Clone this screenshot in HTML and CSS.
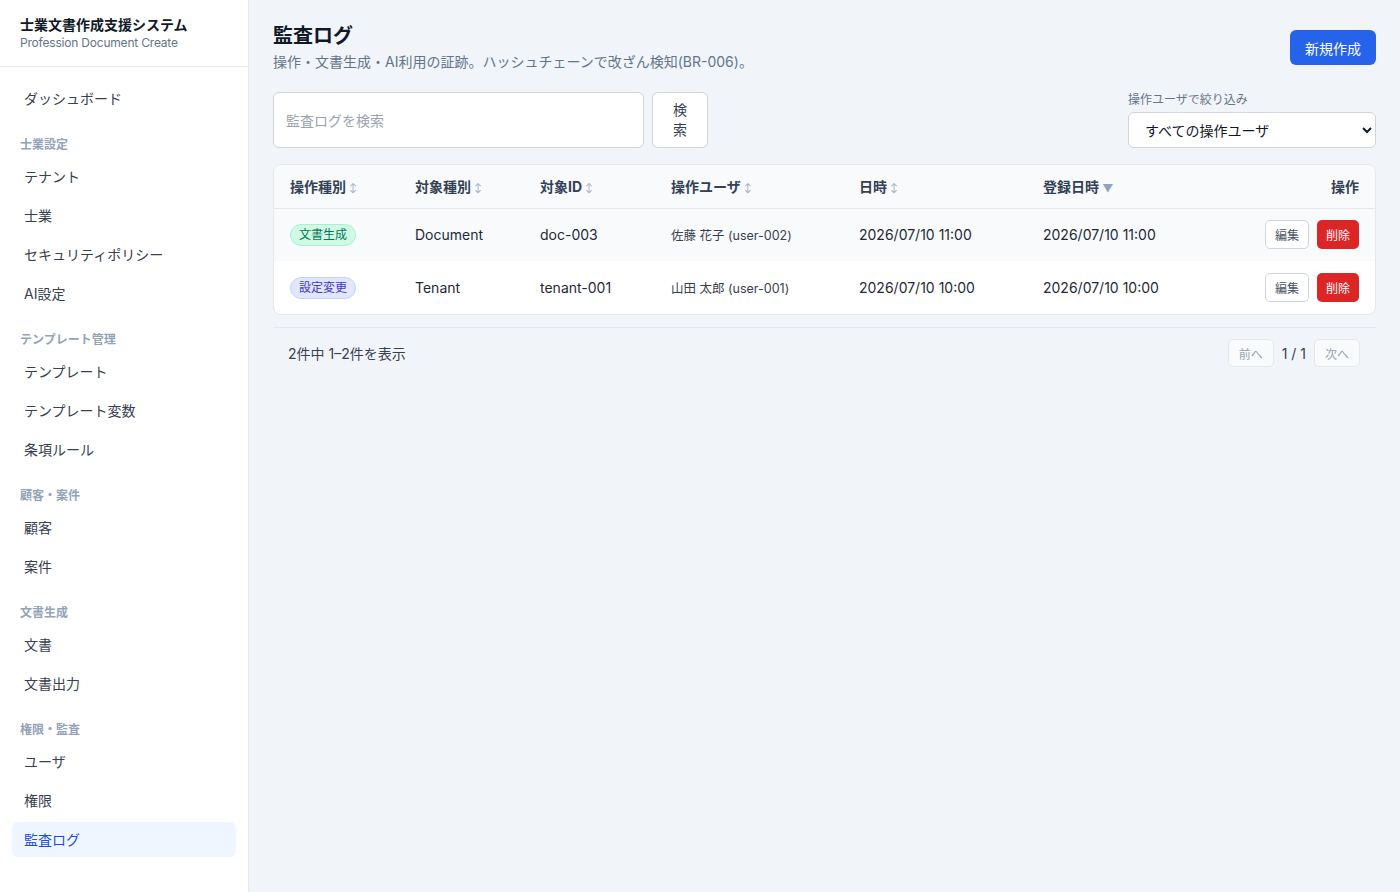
FILE: index.html
```html
<!DOCTYPE html>
<html lang="ja">
<head>
    <meta charset="UTF-8">
    <meta name="viewport" content="width=device-width, initial-scale=1.0">
    <title>監査ログ</title>
    <link rel="stylesheet" href="styles.css">
</head>
<body>
    <aside class="sidebar">
        <div class="brand">
            <div class="brand-title">士業文書作成支援システム</div>
            <div class="brand-sub">Profession Document Create</div>
        </div>
        <nav class="nav">
            <a class="nav-item">ダッシュボード</a>
            <div class="nav-label">士業設定</div>
            <a class="nav-item">テナント</a>
            <a class="nav-item">士業</a>
            <a class="nav-item">セキュリティポリシー</a>
            <a class="nav-item">AI設定</a>
            <div class="nav-label">テンプレート管理</div>
            <a class="nav-item">テンプレート</a>
            <a class="nav-item">テンプレート変数</a>
            <a class="nav-item">条項ルール</a>
            <div class="nav-label">顧客・案件</div>
            <a class="nav-item">顧客</a>
            <a class="nav-item">案件</a>
            <div class="nav-label">文書生成</div>
            <a class="nav-item">文書</a>
            <a class="nav-item">文書出力</a>
            <div class="nav-label">権限・監査</div>
            <a class="nav-item">ユーザ</a>
            <a class="nav-item">権限</a>
            <a class="nav-item active">監査ログ</a>
        </nav>
    </aside>

    <main class="main">
        <div class="page-head">
            <div>
                <h1>監査ログ</h1>
                <p class="page-desc">操作・文書生成・AI利用の証跡。ハッシュチェーンで改ざん検知(BR-006)。</p>
            </div>
            <button class="btn-primary">新規作成</button>
        </div>

        <div class="toolbar">
            <div class="search">
                <input type="text" placeholder="監査ログを検索">
                <button class="btn-search">検索</button>
            </div>
            <div class="filter">
                <label for="userFilter">操作ユーザで絞り込み</label>
                <select id="userFilter">
                    <option>すべての操作ユーザ</option>
                </select>
            </div>
        </div>

        <div class="card">
            <table>
                <thead>
                    <tr>
                        <th class="c1">操作種別 <span class="sort">↕</span></th>
                        <th class="c2">対象種別 <span class="sort">↕</span></th>
                        <th class="c3">対象ID <span class="sort">↕</span></th>
                        <th class="c4">操作ユーザ <span class="sort">↕</span></th>
                        <th class="c5">日時 <span class="sort">↕</span></th>
                        <th class="c6">登録日時 <span class="sort active">▼</span></th>
                        <th class="right">操作</th>
                    </tr>
                </thead>
                <tbody>
                    <tr class="shaded">
                        <td><span class="badge green">文書生成</span></td>
                        <td>Document</td>
                        <td>doc-003</td>
                        <td class="small">佐藤 花子 (user-002)</td>
                        <td>2026/07/10 11:00</td>
                        <td>2026/07/10 11:00</td>
                        <td class="right"><button class="btn-edit">編集</button><button class="btn-delete">削除</button></td>
                    </tr>
                    <tr>
                        <td><span class="badge indigo">設定変更</span></td>
                        <td>Tenant</td>
                        <td>tenant-001</td>
                        <td class="small">山田 太郎 (user-001)</td>
                        <td>2026/07/10 10:00</td>
                        <td>2026/07/10 10:00</td>
                        <td class="right"><button class="btn-edit">編集</button><button class="btn-delete">削除</button></td>
                    </tr>
                </tbody>
            </table>
        </div>

        <div class="pager">
            <span class="count">2件中 1–2件を表示</span>
            <div class="pages">
                <button class="btn-page" disabled>前へ</button>
                <span class="page-no">1 / 1</span>
                <button class="btn-page" disabled>次へ</button>
            </div>
        </div>
    </main>
</body>
</html>
```

FILE: styles.css
```css
* {
    box-sizing: border-box;
}
body {
    margin: 0;
    font-family: Inter, "Noto Sans CJK JP", sans-serif;
    background-color: #f1f5f9;
    color: #1f2937;
    display: flex;
    min-height: 892px;
}
.sidebar {
    width: 249px;
    flex-shrink: 0;
    background: #fff;
    border-right: 1px solid #e5e7eb;
}
.brand {
    padding: 15px 20px;
    border-bottom: 1px solid #e5e7eb;
}
.brand-title {
    font-size: 14px;
    font-weight: 700;
    line-height: 20px;
    color: #111827;
}
.brand-sub {
    font-size: 12px;
    line-height: 16px;
    color: #64748b;
    letter-spacing: -0.2px;
}
.nav {
    padding: 14px 12px;
}
.nav-item {
    display: block;
    padding: 8px 12px;
    margin-bottom: 4px;
    font-size: 14px;
    line-height: 19px;
    color: #374151;
    border-radius: 6px;
}
.nav-item.active {
    background: #eff6ff;
    color: #1d4ed8;
}
.nav-label {
    margin: 21px 8px 6px;
    font-size: 12px;
    font-weight: 600;
    line-height: 16px;
    color: #94a3b8;
}
.nav-label + .nav-item {
    margin-top: 0;
}
.main {
    flex: 1;
    padding: 22px 24px;
}
.page-head {
    display: flex;
    justify-content: space-between;
    align-items: flex-start;
}
h1 {
    margin: 0;
    font-size: 20px;
    line-height: 28px;
    font-weight: 700;
    color: #111827;
}
.page-desc {
    margin: 2px 0 0;
    font-size: 14px;
    line-height: 20px;
    color: #64748b;
}
.btn-primary {
    margin-top: 8px;
    height: 35px;
    padding: 0 15px;
    border: none;
    border-radius: 6px;
    background: #2563eb;
    color: #fff;
    font-family: inherit;
    font-size: 14px;
}
.toolbar {
    display: flex;
    justify-content: space-between;
    align-items: flex-end;
    margin-top: 20px;
}
.search {
    display: flex;
    gap: 8px;
}
.search input {
    width: 371px;
    padding: 0 12px;
    border: 1px solid #d1d5db;
    border-radius: 6px;
    background: #fff;
    font-family: inherit;
    font-size: 14px;
    color: #1f2937;
}
.search input::placeholder {
    color: #9ca3af;
}
.btn-search {
    width: 56px;
    padding: 7px 20px;
    border: 1px solid #d1d5db;
    border-radius: 6px;
    background: #fff;
    font-family: inherit;
    font-size: 14px;
    line-height: 20px;
    color: #374151;
}
.filter label {
    display: block;
    font-size: 12px;
    line-height: 16px;
    color: #64748b;
    margin-bottom: 4px;
}
.filter select {
    width: 248px;
    height: 36px;
    padding: 0 12px;
    border: 1px solid #d1d5db;
    border-radius: 6px;
    background: #fff;
    font-family: inherit;
    font-size: 14px;
    color: #111827;
}
.card {
    margin-top: 16px;
    background: #fff;
    border: 1px solid #e5e7eb;
    border-radius: 8px;
    overflow: hidden;
}
table {
    width: 100%;
    border-collapse: collapse;
}
th {
    text-align: left;
    padding: 0 16px;
    height: 43px;
    background: #f8fafc;
    border-bottom: 1px solid #e5e7eb;
    font-size: 14px;
    font-weight: 700;
    color: #334155;
}
.c1, .c2 { width: 125px; }
.c3 { width: 131px; }
.c4 { width: 188px; }
.c5 { width: 184px; }
.sort {
    font-size: 9px;
    font-weight: 400;
    color: #94a3b8;
    vertical-align: 1px;
}
.sort.active {
    font-size: 11px;
    vertical-align: 0;
}
td {
    padding: 0 16px;
    height: 53px;
    font-size: 14px;
    color: #1f2937;
}
tr.shaded td {
    background: #f8fafc;
}
td.small {
    font-size: 12.5px;
    color: #374151;
}
.right {
    text-align: right;
}
.badge {
    display: inline-block;
    padding: 1px 8px;
    border-radius: 999px;
    font-size: 12px;
    line-height: 18px;
}
.badge.green {
    background: #d1fae5;
    border: 1px solid #a7f3d0;
    color: #047857;
}
.badge.indigo {
    background: #e0e7ff;
    border: 1px solid #c7d2fe;
    color: #4338ca;
}
.btn-edit, .btn-delete {
    height: 29px;
    padding: 0 9px;
    border-radius: 5px;
    font-family: inherit;
    font-size: 12px;
}
.btn-edit {
    border: 1px solid #d1d5db;
    background: #fff;
    color: #4b5563;
}
.btn-delete {
    margin-left: 8px;
    border: none;
    background: #dc2626;
    color: #fff;
}
.pager {
    margin-top: 12px;
    border-top: 1px solid #e2e8f0;
    padding: 11px 16px 0 15px;
    display: flex;
    justify-content: space-between;
    align-items: center;
}
.count {
    font-size: 14px;
    color: #374151;
}
.pages {
    display: flex;
    align-items: center;
    gap: 8px;
}
.btn-page {
    height: 28px;
    padding: 0 10px;
    border: 1px solid #e5e7eb;
    border-radius: 5px;
    background: #f8fafc;
    font-family: inherit;
    font-size: 12px;
    color: #9ca3af;
}
.page-no {
    font-size: 14px;
    color: #374151;
}
```
